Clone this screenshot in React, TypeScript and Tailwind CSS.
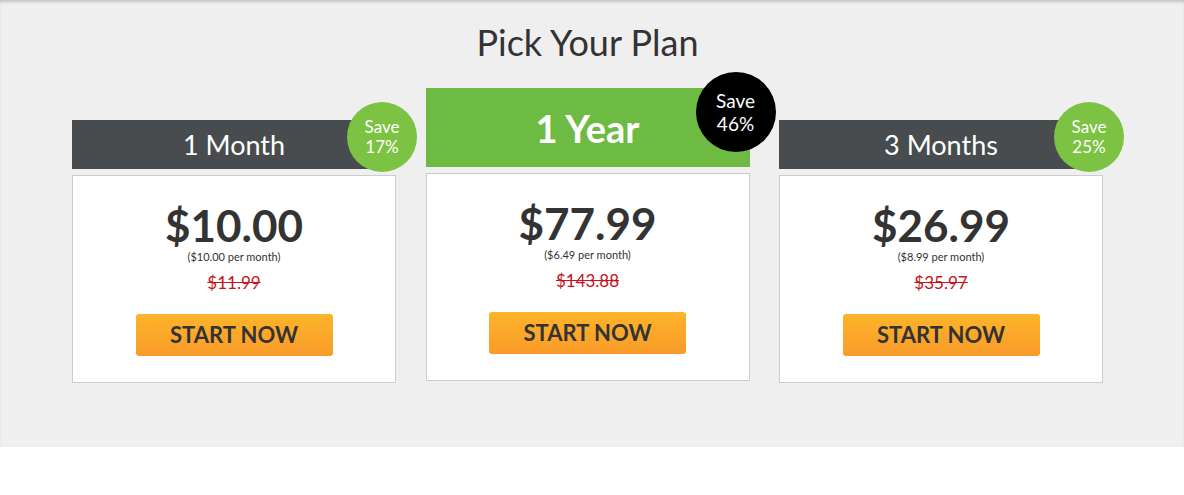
import React from "react";

type Plan = {
  name: string;
  price: string;
  perMonth: string;
  was: string;
  save: string;
  featured?: boolean;
};

const plans: Plan[] = [
  { name: "1 Month", price: "$10.00", perMonth: "($10.00 per month)", was: "$11.99", save: "17%" },
  { name: "1 Year", price: "$77.99", perMonth: "($6.49 per month)", was: "$143.88", save: "46%", featured: true },
  { name: "3 Months", price: "$26.99", perMonth: "($8.99 per month)", was: "$35.97", save: "25%" },
];

function PlanCard({ plan }: { plan: Plan }) {
  const featured = plan.featured;
  return (
    <div className={featured ? "w-[324px]" : "w-[324px] mt-[32px]"}>
      <div
        className={
          featured
            ? "relative flex h-[79px] items-center justify-center bg-[#6dbb43]"
            : "relative flex h-[49px] items-center justify-center bg-[#484c4f]"
        }
      >
        <span
          className={
            featured
              ? "text-[38px] font-bold leading-none text-white"
              : "text-[27px] leading-none text-white"
          }
        >
          {plan.name}
        </span>
        <div
          className={
            featured
              ? "absolute right-[-26px] top-[-16px] flex h-[80px] w-[80px] flex-col items-center justify-center rounded-full bg-black text-[19px] leading-[23px] text-white"
              : "absolute right-[-21px] top-[-18px] flex h-[70px] w-[70px] flex-col items-center justify-center rounded-full bg-[#7cc243] text-[17px] leading-[20px] text-white"
          }
        >
          <span>Save</span>
          <span>{plan.save}</span>
        </div>
      </div>

      <div className="mt-[6px] flex h-[208px] flex-col items-center border border-[#cccccc] bg-white pt-[27px]">
        <div className="text-[44px] font-bold leading-[44px] text-[#333]">{plan.price}</div>
        <div className="mt-[3px] text-[11px] leading-[13px] text-[#333]">{plan.perMonth}</div>
        <div className="mt-[10px] text-[17px] leading-[20px] text-[#c4161c] line-through">{plan.was}</div>
        <button
          type="button"
          className="mt-[21px] flex h-[42px] w-[197px] items-center justify-center rounded-[3px] bg-gradient-to-b from-[#fdb42a] to-[#f99b2a] text-[22px] font-bold leading-none text-[#333]"
        >
          START NOW
        </button>
      </div>
    </div>
  );
}

export default function App() {
  return (
    <div className="min-h-[495px] bg-white font-['Lato','Liberation_Sans',sans-serif]">
      <div className="h-[447px] bg-[#efefef] pt-[20px] shadow-[inset_0_3px_3px_-1px_rgba(0,0,0,0.18)]">
        <div className="ml-[72px] w-[1031px]">
          <h1 className="text-center text-[36px] leading-[44px] text-[#333]">Pick Your Plan</h1>
          <div className="mt-[24px] flex items-start gap-[29.5px]">
            {plans.map((p) => (
              <PlanCard key={p.name} plan={p} />
            ))}
          </div>
        </div>
      </div>
    </div>
  );
}
